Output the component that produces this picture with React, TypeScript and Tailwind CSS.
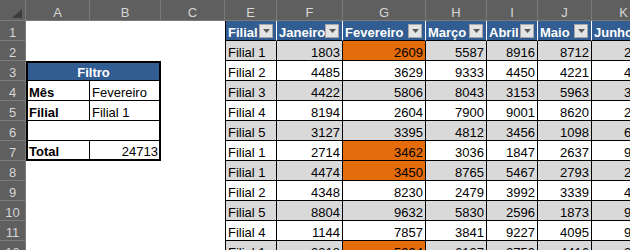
const BLUE = "bg-[#315d92]";

type DataRow = { filial: string; vals: number[]; hi?: boolean };

const data: DataRow[] = [
  { filial: "Filial 1", vals: [1803, 2609, 5587, 8916, 8712, 2640], hi: true },
  { filial: "Filial 2", vals: [4485, 3629, 9333, 4450, 4221, 4860] },
  { filial: "Filial 3", vals: [4422, 5806, 8043, 3153, 5963, 3450] },
  { filial: "Filial 4", vals: [8194, 2604, 7900, 9001, 8620, 2240] },
  { filial: "Filial 5", vals: [3127, 3395, 4812, 3456, 1098, 6910] },
  { filial: "Filial 1", vals: [2714, 3462, 3036, 1847, 2637, 9060], hi: true },
  { filial: "Filial 1", vals: [4474, 3450, 8765, 5467, 2793, 2190], hi: true },
  { filial: "Filial 2", vals: [4348, 8230, 2479, 3992, 3339, 4080] },
  { filial: "Filial 5", vals: [8804, 9632, 5830, 2596, 1873, 9420] },
  { filial: "Filial 4", vals: [1144, 7857, 3841, 9227, 4095, 9480] },
  { filial: "Filial 1", vals: [3318, 5204, 6127, 2750, 4416, 3390], hi: true },
];

// widths of F..K (E handled separately because it carries the table's left edge)
const numW = ["w-[66px]", "w-[83px]", "w-[61px]", "w-[51px]", "w-[54px]", "w-[64px]"];
const months = ["Janeiro", "Fevereiro", "Março", "Abril", "Maio", "Junho"];

const letters: [string, string][] = [
  ["A", "w-[64px]"],
  ["B", "w-[71px]"],
  ["C", "w-[64px]"],
  ["E", "w-[52px]"],
  ["F", "w-[66px]"],
  ["G", "w-[83px]"],
  ["H", "w-[61px]"],
  ["I", "w-[51px]"],
  ["J", "w-[54px]"],
  ["K", "w-[64px]"],
];

function FilterBtn() {
  return (
    <span className="mb-[2px] ml-auto mr-[3px] flex h-[14px] w-[14px] shrink-0 items-center justify-center border border-[#a6a6a6] bg-[#e4e4e4]">
      <svg width="7" height="4" viewBox="0 0 7 4">
        <path d="M0 0h7L3.5 4z" fill="#595959" />
      </svg>
    </span>
  );
}

function RowNum({ n }: { n: number }) {
  return (
    <div className="flex h-full w-[26px] shrink-0 items-end justify-center border-r border-b border-[#7a7a7a] bg-[#5f5f5f] leading-[15px] text-[#d6d6d6]">
      {n}
    </div>
  );
}

function LeftBlock({ r }: { r: number }) {
  if (r === 3)
    return (
      <div className={`flex h-full w-[135px] shrink-0 items-end justify-center border-t-2 border-r-2 border-b border-l-2 border-black ${BLUE} leading-[15px] font-bold text-white`}>
        Filtro
      </div>
    );
  if (r === 4 || r === 5)
    return (
      <>
        <div className="flex h-full w-[64px] shrink-0 items-end border-r border-b border-l-2 border-black pl-[1px] leading-[15px] font-bold">
          {r === 4 ? "Mês" : "Filial"}
        </div>
        <div className="flex h-full w-[71px] shrink-0 items-end border-r-2 border-b border-black pl-[2px] leading-[15px]">
          {r === 4 ? "Fevereiro" : "Filial 1"}
        </div>
      </>
    );
  if (r === 6)
    return <div className="h-full w-[135px] shrink-0 border-r-2 border-b border-l-2 border-black" />;
  if (r === 7)
    return (
      <>
        <div className="flex h-full w-[64px] shrink-0 items-end border-r border-b-2 border-l-2 border-black pl-[1px] leading-[15px] font-bold">
          Total
        </div>
        <div className="flex h-full w-[71px] shrink-0 items-end justify-end border-r-2 border-b-2 border-black pr-[1px] leading-[15px]">
          24713
        </div>
      </>
    );
  return <div className="h-full w-[135px] shrink-0" />;
}

export default function App() {
  return (
    <div className="h-[250px] w-[630px] overflow-hidden bg-white font-['Liberation_Sans',Arial,sans-serif] text-[13px] text-black">
      {/* column letters */}
      <div className="flex h-[21px]">
        <div className="relative h-full w-[26px] shrink-0 border-r border-b border-[#7a7a7a] bg-[#5f5f5f]">
          <svg className="absolute left-0 top-0" width="25" height="20" viewBox="0 0 25 20">
            <path d="M22 9V18H12z" fill="#3c3c3c" />
          </svg>
        </div>
        {letters.map(([l, w]) => (
          <div
            key={l}
            className={`flex h-full ${w} shrink-0 items-end justify-center border-r border-b border-[#7a7a7a] bg-[#5f5f5f] leading-[15px] text-[#d6d6d6]`}
          >
            {l}
          </div>
        ))}
      </div>

      {/* row 1: table header */}
      <div className="flex h-[20px]">
        <RowNum n={1} />
        <div className="h-full w-[135px] shrink-0" />
        <div className="h-full w-[64px] shrink-0" />
        <div className={`flex h-full w-[52px] shrink-0 items-end border-r border-b border-l border-r-white border-b-black border-l-black ${BLUE} pl-[2px] leading-[15px] font-bold text-white`}>
          <span>Filial</span>
          <FilterBtn />
        </div>
        {months.map((m, i) => (
          <div
            key={m}
            className={`flex h-full ${numW[i]} shrink-0 items-end overflow-hidden border-r border-b border-r-white border-b-black ${BLUE} pl-[2px] leading-[15px] font-bold whitespace-nowrap text-white`}
          >
            <span>{m}</span>
            {i < 5 && <FilterBtn />}
          </div>
        ))}
      </div>

      {data.map((d, idx) => {
        const r = idx + 2;
        const band = r % 2 === 0 ? "bg-[#d9d9d9]" : "bg-white";
        return (
          <div key={r} className="flex h-[20px]">
            <RowNum n={r} />
            <LeftBlock r={r} />
            <div className="h-full w-[64px] shrink-0" />
            <div className={`flex h-full w-[52px] shrink-0 items-end border-r border-b border-l border-black ${band} pl-[2px] leading-[15px] whitespace-nowrap`}>
              {d.filial}
            </div>
            {d.vals.map((v, i) => (
              <div
                key={i}
                className={`flex h-full ${numW[i]} shrink-0 items-end justify-end border-r border-b border-black ${
                  i === 1 && d.hi ? "bg-[#e46c0a]" : band
                } pr-[2px] leading-[15px]`}
              >
                {v}
              </div>
            ))}
          </div>
        );
      })}
    </div>
  );
}
